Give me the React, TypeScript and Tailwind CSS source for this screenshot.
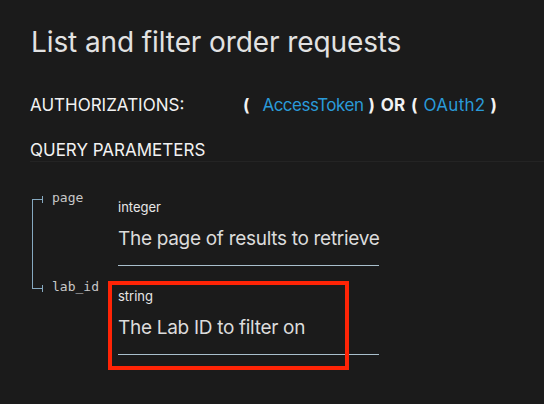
const params = [
  { name: 'page', type: 'integer', description: 'The page of results to retrieve', first: true },
  { name: 'lab_id', type: 'string', description: 'The Lab ID to filter on', first: false }
]

export default function App() {
  return (
    <div className="w-[544px] h-[404px] overflow-hidden bg-[#1b1b1b] pl-[30px] pt-[24px] font-['Inter',sans-serif]">
      <h1 className="ml-[1px] text-[28px] leading-[36px] tracking-[-0.1px] font-normal text-[#e2e2e2]">
        List and filter order requests
      </h1>

      <div className="mt-[33px] flex text-[17px] leading-[24px] text-[#f2f2f2]">
        <div className="w-[213px] shrink-0">AUTHORIZATIONS:</div>
        <div className="flex">
          <span className="font-bold">(</span>
          <span className="ml-[13px] tracking-[-0.5px] text-[#2a9ad8]">AccessToken</span>
          <span className="ml-[5px] font-bold">)</span>
          <span className="ml-[6px] font-bold">OR</span>
          <span className="ml-[6px] font-bold">(</span>
          <span className="ml-[6px] tracking-[0.3px] text-[#2a9ad8]">OAuth2</span>
          <span className="ml-[5px] font-bold">)</span>
        </div>
      </div>

      <div className="mt-[22px] border-b border-[#242424] text-[17px] leading-[22px] text-[#f2f2f2]">
        QUERY PARAMETERS
      </div>

      <div className="mt-[27px] pl-[2px]">
        {params.map((p) => (
          <div key={p.name} className="flex">
            <div className="w-[86px] shrink-0 flex">
              {p.first ? (
                <div className="w-[10px] flex flex-col">
                  <div className="h-[10px]" />
                  <div className="flex-1 border-l border-t border-[#86a9c0]" />
                </div>
              ) : (
                <div className="w-[10px] flex flex-col">
                  <div className="h-[11px] border-l border-b border-[#86a9c0]" />
                </div>
              )}
              <div className="w-px h-[7px] mt-[7px] bg-[#86a9c0]" />
              <div className="ml-[9px] mt-[1px] font-['DejaVu_Sans_Mono',monospace] text-[13px] leading-[16px] text-[#c8c8c8]">
                {p.name}
              </div>
            </div>
            <div className="relative mb-[12px] w-[261px] border-b border-[#a9bfcc] pt-[10px] pb-[12px]">
              <div className="text-[13px] leading-[16px] text-[#e6e6e6]">{p.type}</div>
              <div className="mt-[10px] text-[19px] leading-[28px] tracking-[-0.3px] text-[#dcdcdc] whitespace-nowrap">
                {p.description}
              </div>
              {!p.first && (
                <div className="absolute left-[-10px] top-[3px] w-[241px] h-[89px] border-4 border-[#ff2406]" />
              )}
            </div>
          </div>
        ))}
      </div>
    </div>
  )
}
